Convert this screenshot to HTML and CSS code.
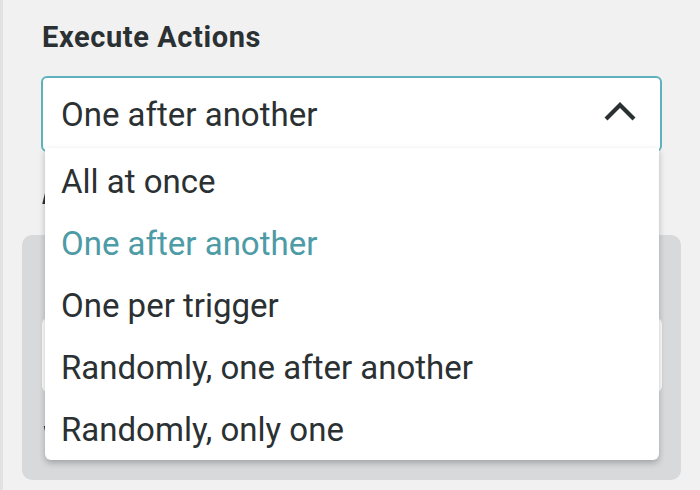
FILE: index.html
```html
<!DOCTYPE html>
<html lang="en">
<head>
<meta charset="utf-8">
<title>Execute Actions</title>
<link rel="stylesheet" href="styles.css">
</head>
<body>
<div class="page">
  <h2 class="title">Execute Actions</h2>
  <div class="select">
    <span class="value">One after another</span>
    <svg class="chev" width="34" height="22" viewBox="0 0 34 22"><path d="M3 19 L17 5 L31 19" fill="none" stroke="#2b3133" stroke-width="4.2" stroke-linecap="butt"/></svg>
    <ul class="menu">
      <li class="opt">All at once</li>
      <li class="opt sel">One after another</li>
      <li class="opt">One per trigger</li>
      <li class="opt">Randomly, one after another</li>
      <li class="opt">Randomly, only one</li>
    </ul>
  </div>
  <div class="sub"><span class="sliver sliver-a"></span></div>
  <div class="panel">
    <div class="plabel"><span class="sliver sliver-t"></span></div>
    <div class="pinput"></div>
    <div class="plabel2"><span class="sliver sliver-v"></span></div>
  </div>
</div>
</body>
</html>
```

FILE: styles.css
```css
html, body {
  margin: 0;
  padding: 0;
  height: 100%;
}
body {
  background: #f1f1f1;
  font-family: Roboto, "Liberation Sans", sans-serif;
  color: #2b3133;
  overflow: hidden;
}
.page {
  border-left: 3px solid #e2e2e2;
  height: 100%;
  box-sizing: border-box;
  padding: 0 38px 0 38px;
}
.title {
  margin: 0;
  padding-top: 19px;
  padding-left: 1px;
  font-size: 29px;
  line-height: 36px;
  font-weight: 700;
  letter-spacing: 0.6px;
}
.select {
  position: relative;
  margin-top: 21px;
  height: 76px;
  box-sizing: border-box;
  border: 2px solid #5fb1bd;
  border-radius: 6px;
  background: #fff;
  display: flex;
  align-items: center;
  justify-content: space-between;
  padding: 0 23px 0 18px;
  z-index: 2;
}
.value {
  font-size: 33px;
  line-height: 40px;
  margin-top: 2px;
}
.chev {
  display: block;
  margin-top: -6px;
}
.menu {
  position: absolute;
  left: 2px;
  top: 70px;
  width: 614px;
  margin: 0;
  padding: 0 0 2px 0;
  list-style: none;
  background: #fff;
  border-radius: 0 0 6px 6px;
  box-shadow: 0 3px 6px rgba(0, 0, 0, 0.25);
}
.opt {
  height: 62px;
  box-sizing: border-box;
  padding: 14px 0 0 16px;
  font-size: 33px;
  line-height: 40px;
  color: #2b3133;
}
.opt.sel {
  color: #4c9ba6;
}
.sub {
  margin-top: 38px;
  padding-left: 1px;
  height: 24px;
}
.sliver {
  display: block;
  width: 3px;
  background: #2b3133;
}
.sliver-a {
  height: 14px;
  margin-left: 2px;
  transform: skewX(-14deg);
}
.sliver-t {
  height: 3px;
  margin-left: 3px;
}
.sliver-v {
  height: 10px;
  margin-left: 3px;
  transform: skewX(14deg);
}
.panel {
  margin: 21px -19px 0 -19px;
  height: 245px;
  background: #d8d9da;
  border-radius: 10px;
  padding: 24px 19px 0 20px;
  box-sizing: border-box;
}
.plabel {
  height: 20px;
  padding-top: 6px;
  box-sizing: border-box;
}
.pinput {
  margin-top: 39px;
  height: 74px;
  background: #fff;
  border-radius: 6px;
}
.plabel2 {
  margin-top: 34px;
  height: 20px;
}
```
